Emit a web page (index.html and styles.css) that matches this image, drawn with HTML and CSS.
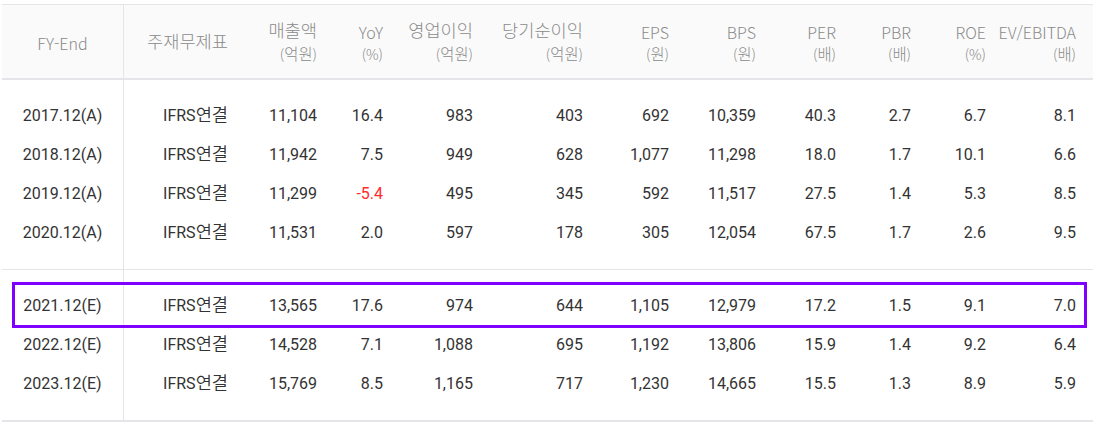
FILE: index.html
```html
<!DOCTYPE html>
<html lang="ko">
<head>
<meta charset="utf-8">
<link rel="stylesheet" href="styles.css">
</head>
<body>
<div class="fin">
  <div class="row head">
    <div class="c first">FY-End</div>
    <div class="c"><span class="k">주재무제표</span></div>
    <div class="c"><span class="k">매출액</span><span class="u">(<span class="k">억원</span>)</span></div>
    <div class="c"><span>YoY</span><span class="u">(%)</span></div>
    <div class="c"><span class="k">영업이익</span><span class="u">(<span class="k">억원</span>)</span></div>
    <div class="c"><span class="k">당기순이익</span><span class="u">(<span class="k">억원</span>)</span></div>
    <div class="c"><span>EPS</span><span class="u">(<span class="k">원</span>)</span></div>
    <div class="c"><span>BPS</span><span class="u">(<span class="k">원</span>)</span></div>
    <div class="c"><span>PER</span><span class="u">(<span class="k">배</span>)</span></div>
    <div class="c"><span>PBR</span><span class="u">(<span class="k">배</span>)</span></div>
    <div class="c"><span>ROE</span><span class="u">(%)</span></div>
    <div class="c"><span>EV/EBITDA</span><span class="u">(<span class="k">배</span>)</span></div>
    <div class="c"></div>
  </div>
  <div class="group">
    <div class="row">
      <div class="c first">2017.12(A)</div><div class="c">IFRS<span class="k">연결</span></div><div class="c">11,104</div><div class="c">16.4</div><div class="c">983</div><div class="c">403</div><div class="c">692</div><div class="c">10,359</div><div class="c">40.3</div><div class="c">2.7</div><div class="c">6.7</div><div class="c">8.1</div><div class="c"></div>
    </div>
    <div class="row">
      <div class="c first">2018.12(A)</div><div class="c">IFRS<span class="k">연결</span></div><div class="c">11,942</div><div class="c">7.5</div><div class="c">949</div><div class="c">628</div><div class="c">1,077</div><div class="c">11,298</div><div class="c">18.0</div><div class="c">1.7</div><div class="c">10.1</div><div class="c">6.6</div><div class="c"></div>
    </div>
    <div class="row">
      <div class="c first">2019.12(A)</div><div class="c">IFRS<span class="k">연결</span></div><div class="c">11,299</div><div class="c neg">-5.4</div><div class="c">495</div><div class="c">345</div><div class="c">592</div><div class="c">11,517</div><div class="c">27.5</div><div class="c">1.4</div><div class="c">5.3</div><div class="c">8.5</div><div class="c"></div>
    </div>
    <div class="row">
      <div class="c first">2020.12(A)</div><div class="c">IFRS<span class="k">연결</span></div><div class="c">11,531</div><div class="c">2.0</div><div class="c">597</div><div class="c">178</div><div class="c">305</div><div class="c">12,054</div><div class="c">67.5</div><div class="c">1.7</div><div class="c">2.6</div><div class="c">9.5</div><div class="c"></div>
    </div>
  </div>
  <div class="group">
    <div class="row hl">
      <div class="c first">2021.12(E)</div><div class="c">IFRS<span class="k">연결</span></div><div class="c">13,565</div><div class="c">17.6</div><div class="c">974</div><div class="c">644</div><div class="c">1,105</div><div class="c">12,979</div><div class="c">17.2</div><div class="c">1.5</div><div class="c">9.1</div><div class="c">7.0</div><div class="c"></div>
    </div>
    <div class="row">
      <div class="c first">2022.12(E)</div><div class="c">IFRS<span class="k">연결</span></div><div class="c">14,528</div><div class="c">7.1</div><div class="c">1,088</div><div class="c">695</div><div class="c">1,192</div><div class="c">13,806</div><div class="c">15.9</div><div class="c">1.4</div><div class="c">9.2</div><div class="c">6.4</div><div class="c"></div>
    </div>
    <div class="row">
      <div class="c first">2023.12(E)</div><div class="c">IFRS<span class="k">연결</span></div><div class="c">15,769</div><div class="c">8.5</div><div class="c">1,165</div><div class="c">717</div><div class="c">1,230</div><div class="c">14,665</div><div class="c">15.5</div><div class="c">1.3</div><div class="c">8.9</div><div class="c">5.9</div><div class="c"></div>
    </div>
  </div>
</div>
</body>
</html>
```
FILE: styles.css
```css
body {
  margin: 0;
  background: #fff;
}
.fin {
  margin: 4px 0 0 2px;
  width: 1091px;
  border-top: 1px solid #e4e4e9;
  border-bottom: 2px solid #e4e4e9;
  font-family: Roboto, "Noto Sans CJK KR", sans-serif;
  font-size: 16px;
}
.row {
  display: grid;
  grid-template-columns: 122px 104px 89px 66px 90px 110px 86px 87px 80px 75px 75px 90px 17px;
}
.k {
  font-family: "Noto Sans CJK KR", sans-serif;
  font-size: 1.1em;
  line-height: 1;
}
.head {
  height: 73px;
  background: #fafafa;
  border-bottom: 2px solid #e4e4e9;
  color: #8a8a8a;
  font-family: "Noto Sans CJK KR", sans-serif;
  font-weight: 300;
}
.head .c {
  display: flex;
  flex-direction: column;
  justify-content: center;
  align-items: flex-end;
  padding-top: 3px;
  line-height: 22px;
}
.head .c > span {
  height: 22px;
}
.head .c.first {
  align-items: center;
}
.u {
  font-size: 14px;
}
.c.first {
  border-right: 1px solid #e4e4e9;
}
.group + .group {
  border-top: 1px solid #e4e4e9;
}
.group .c {
  height: 39px;
  line-height: 39px;
  text-align: right;
  color: #333;
  box-sizing: content-box;
}
.group .k {
  font-weight: 350;
}
.group .c.first {
  text-align: center;
}
.group .c.neg {
  color: #ff2b2b;
}
.group .row:first-child .c {
  padding-top: 16px;
}
.group .row:last-child .c {
  padding-bottom: 17px;
}
.hl {
  position: relative;
}
.hl::after {
  content: "";
  position: absolute;
  left: 10px;
  right: 6px;
  top: 12px;
  bottom: -3px;
  border: 3px solid #7f00ff;
  pointer-events: none;
}
```
